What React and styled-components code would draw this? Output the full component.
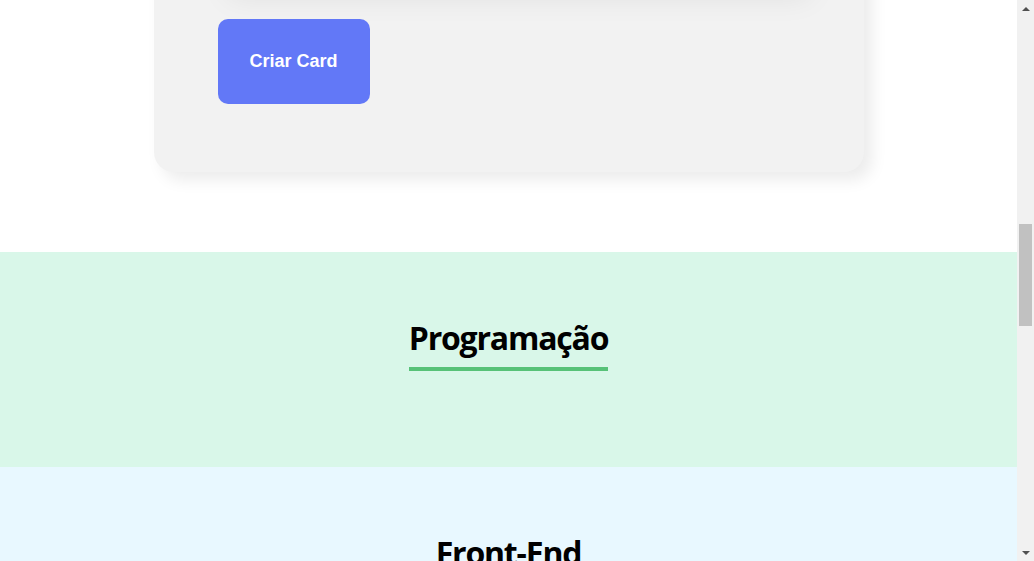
import React from 'react';
import styled, { createGlobalStyle } from 'styled-components';

const times = [
    { nome: 'Programação', corPrimaria: '#57C278', corSecundaria: '#D9F7E9' },
    { nome: 'Front-End', corPrimaria: '#82CFFA', corSecundaria: '#E8F8FF' },
    { nome: 'Data Science', corPrimaria: '#A6D157', corSecundaria: '#F0F8E2' },
    { nome: 'Devops', corPrimaria: '#E06B69', corSecundaria: '#FDE7E8' },
];

// fraction of the page already scrolled past, used for the scrollbar thumb
const scrollFraction = 0.393;

const App = () => {
    return (
        <Screen>
            <GlobalStyle />
            <Viewport>
                <Page>
                    <FormSection>
                        <Form onSubmit={e => e.preventDefault()}>
                            <Select aria-label="Time" />
                            <Button>Criar Card</Button>
                        </Form>
                    </FormSection>
                    {times.map(time => (
                        <Time key={time.nome} bg={time.corSecundaria}>
                            <TimeTitle line={time.corPrimaria}>{time.nome}</TimeTitle>
                            <Colaboradores />
                        </Time>
                    ))}
                </Page>
            </Viewport>
            <Scrollbar>
                <Arrow><ArrowUp /></Arrow>
                <Track style={{ paddingTop: `${Math.round(scrollFraction * 527)}px` }}>
                    <Thumb />
                </Track>
                <Arrow><ArrowDown /></Arrow>
            </Scrollbar>
        </Screen>
    );
};

export default App;

const GlobalStyle = createGlobalStyle`
    html, body {
        margin: 0;
        padding: 0;
        overflow: hidden;
    }
    * {
        box-sizing: border-box;
    }
    body {
        font-family: "Open Sans", "Noto Sans", sans-serif;
    }
`;

const Screen = styled.div`
    display: flex;
    width: 1034px;
    height: 561px;
    overflow: hidden;
    background: #fff;
`;

const Viewport = styled.div`
    flex: 1;
    overflow: hidden;
`;

const Page = styled.main`
    margin-top: -205px;
`;

const FormSection = styled.section`
    display: flex;
    justify-content: center;
    margin: 80px 0;
`;

const Form = styled.form`
    width: 710px;
    background: #F2F2F2;
    border-radius: 20px;
    padding: 36px 64px;
    box-shadow: 8px 8px 16px rgba(0, 0, 0, 0.08);
`;

const Select = styled.div`
    height: 76px;
    background: #fff;
    box-shadow: 10px 10px 30px rgba(0, 0, 0, 0.08);
`;

const Button = styled.button`
    display: block;
    margin: 32px 0;
    padding: 32px;
    border: none;
    border-radius: 10px;
    background: #6278F7;
    color: #fff;
    font-family: "Liberation Sans", Arial, sans-serif;
    font-size: 18px;
    font-weight: 700;
    line-height: 21px;
    cursor: pointer;
`;

const Time = styled.section`
    background: ${props => props.bg};
    text-align: center;
    padding: 32px;
`;

const TimeTitle = styled.h3`
    display: inline-block;
    margin: 32px 0;
    padding-bottom: 8px;
    border-bottom: 4px solid ${props => props.line};
    font-size: 32px;
    line-height: 43px;
    letter-spacing: -1.2px;
    font-weight: 700;
    color: #000;
`;

const Colaboradores = styled.div`
    height: 32px;
`;

const Scrollbar = styled.div`
    width: 17px;
    display: flex;
    flex-direction: column;
    background: #F1F1F1;
`;

const Arrow = styled.div`
    height: 17px;
    display: flex;
    align-items: center;
    justify-content: center;
`;

const ArrowUp = styled.div`
    width: 0;
    height: 0;
    border-left: 4px solid transparent;
    border-right: 4px solid transparent;
    border-bottom: 4px solid #505050;
`;

const ArrowDown = styled(ArrowUp)`
    border-bottom: none;
    border-top: 4px solid #505050;
`;

const Track = styled.div`
    flex: 1;
    display: flex;
    flex-direction: column;
    align-items: center;
`;

const Thumb = styled.div`
    width: 13px;
    height: 102px;
    background: #C1C1C1;
`;
